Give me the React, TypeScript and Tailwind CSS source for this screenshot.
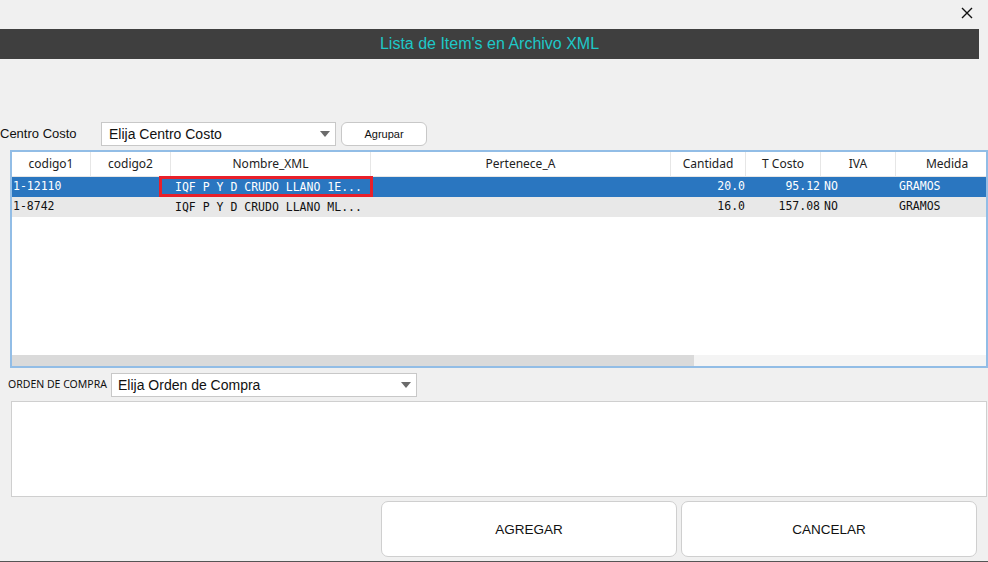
import React from "react";

const cols = [
  { name: "codigo1", w: 79 },
  { name: "codigo2", w: 80 },
  { name: "Nombre_XML", w: 200 },
  { name: "Pertenece_A", w: 300 },
  { name: "Cantidad", w: 75 },
  { name: "T Costo", w: 75 },
  { name: "IVA", w: 75 },
  { name: "Medida", w: 102 },
];

const rows = [
  { c1: "1-12110", n: "IQF P Y D CRUDO LLANO 1E...", cant: "20.0", cost: "95.12", iva: "NO", med: "GRAMOS" },
  { c1: "1-8742", n: "IQF P Y D CRUDO LLANO ML...", cant: "16.0", cost: "157.08", iva: "NO", med: "GRAMOS" },
];

function Caret() {
  return (
    <svg width="10" height="6" viewBox="0 0 10 6" className="shrink-0">
      <path d="M0 0 L10 0 L5 6 Z" fill="#6b6b6b" />
    </svg>
  );
}

export default function App() {
  const mono = { fontFamily: '"DejaVu Sans Mono", monospace' };
  const noto = { fontFamily: '"Noto Sans", sans-serif' };
  return (
    <div
      className="w-[988px] h-[562px] bg-[#f0f0f0] relative overflow-hidden flex flex-col"
      style={{ fontFamily: '"Liberation Sans", Arial, sans-serif' }}
    >
      {/* close */}
      <div className="h-[29px] flex justify-end items-start pr-[15px] pt-[7px]">
        <svg width="12" height="12" viewBox="0 0 12 12">
          <path d="M1 1 L11 11 M11 1 L1 11" stroke="#111" strokeWidth="1.4" />
        </svg>
      </div>
      {/* title bar */}
      <div className="h-[30px] w-[979px] bg-[#3f3f3f] flex items-center justify-center text-[16px] text-[#1ec8c8]">
        Lista de Item's en Archivo XML
      </div>

      {/* centro costo */}
      <div className="mt-[62px] h-[26px] flex items-center">
        <span className="text-[13px] text-[#111] w-[101px]">Centro Costo</span>
        <div className="w-[235px] h-[24px] bg-white border border-[#c8c8c8] flex items-center justify-between pl-[7px] pr-[5px] text-[14px] text-[#111]">
          <span>Elija Centro Costo</span>
          <Caret />
        </div>
        <div className="ml-[5px] w-[86px] h-[24px] bg-white border border-[#c8c8c8] rounded-[6px] flex items-center justify-center text-[11px] text-[#111]">
          Agrupar
        </div>
      </div>

      {/* table */}
      <div className="mt-[3px] ml-[10px] w-[978px] h-[218px] border-2 border-[#92bde6] bg-white flex flex-col overflow-hidden">
        <div className="h-[25px] flex border-b border-[#e6e6e6] shrink-0" style={noto}>
          {cols.map((c, i) => (
            <div
              key={c.name}
              className={`h-full shrink-0 flex items-center justify-center text-[12px] text-[#222] ${i < cols.length - 1 ? "border-r border-[#e6e6e6]" : ""}`}
              style={{ width: c.w }}
            >
              {c.name}
            </div>
          ))}
        </div>
        {rows.map((r, i) => (
          <div
            key={r.c1}
            className={`h-[20px] flex items-center text-[11.5px] shrink-0 ${i === 0 ? "bg-[#2a76c0] text-white" : "bg-[#e8e8e8] text-[#111]"}`}
            style={mono}
          >
            <div className="w-[79px] pl-[1px]">{r.c1}</div>
            <div className="w-[80px]"></div>
            <div className="w-[200px] h-full relative">
              {i === 0 && (
                <div className="absolute left-[-12px] top-[-1px] w-[214px] h-[21px] border-[3px] border-[#e8202a]" />
              )}
              <span className="absolute left-[4px] top-[2px]">{r.n}</span>
            </div>
            <div className="w-[300px]"></div>
            <div className="w-[75px] text-right pr-[1px]">{r.cant}</div>
            <div className="w-[75px] text-right pr-[1px]">{r.cost}</div>
            <div className="w-[75px] pl-[3px]">{r.iva}</div>
            <div className="w-[90px] pl-[3px]">{r.med}</div>
          </div>
        ))}
        <div className="flex-1" />
        <div className="h-[11px] bg-[#f4f4f4] shrink-0 flex">
          <div className="w-[682px] h-full bg-[#dadada]" />
        </div>
      </div>

      {/* orden de compra */}
      <div className="mt-[5px] h-[24px] flex items-center">
        <span className="text-[10.5px] text-[#111] pl-[8px] w-[111px]" style={noto}>
          ORDEN DE COMPRA
        </span>
        <div className="w-[306px] h-[24px] bg-white border border-[#c8c8c8] flex items-center justify-between pl-[6px] pr-[5px] text-[14px] text-[#111]">
          <span>Elija Orden de Compra</span>
          <Caret />
        </div>
      </div>

      {/* text area */}
      <div className="mt-[4px] ml-[11px] w-[976px] h-[96px] bg-white border border-[#cfcfcf]" />

      {/* buttons */}
      <div className="mt-[4px] ml-[381px] flex gap-[4px]">
        <div className="w-[296px] h-[56px] pt-[2px] bg-white border border-[#cfcfcf] rounded-[7px] flex items-center justify-center text-[13.5px] text-[#111]">
          AGREGAR
        </div>
        <div className="w-[296px] h-[56px] pt-[2px] bg-white border border-[#cfcfcf] rounded-[7px] flex items-center justify-center text-[13.5px] text-[#111]">
          CANCELAR
        </div>
      </div>
      <div className="absolute left-0 bottom-0 w-full h-[1px] bg-[#555]" />
    </div>
  );
}
